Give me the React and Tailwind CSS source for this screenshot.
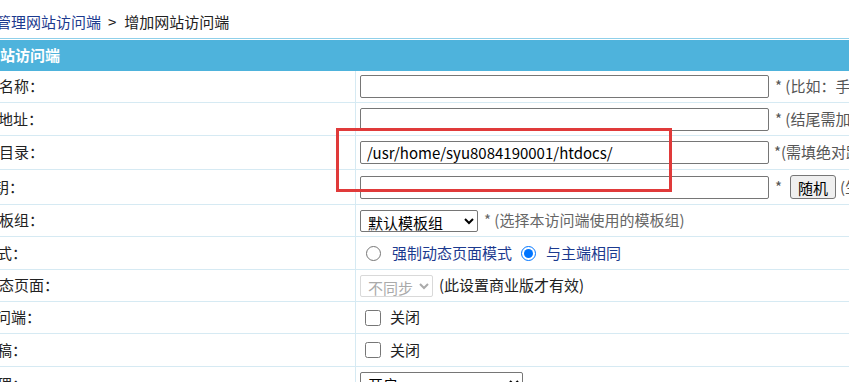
export default function App() {
  const font = { fontFamily: '"Microsoft YaHei", "Noto Sans CJK SC", "Noto Sans", sans-serif' };
  const rowBase = "flex items-center border-b border-[#d6eaf3]";
  const labelCell = "w-[356px] shrink-0 h-full flex items-center border-r border-[#d6eaf3] text-[15px] text-[#222] overflow-hidden whitespace-nowrap";
  const valCell = "flex items-center h-full pl-[4px] whitespace-nowrap text-[15px]";
  const inputCls = "w-[409px] h-[23px] border border-[#767676] rounded-[2px] px-[6px] text-[15px] text-black bg-white outline-none";
  return (
    <div className="w-[849px] h-[382px] overflow-hidden bg-white relative" style={font}>
      <div className="h-[38px] flex items-center text-[15px] whitespace-nowrap ml-[-4px] pt-[7px]">
        <span className="text-[#1c3a8f]">管理网站访问端</span>
        <span className="text-[#222] ml-[7px] mr-[8px]">&gt;</span>
        <span className="text-[#222]">增加网站访问端</span>
      </div>
      <div className="border-t border-[#8fd0ea] mt-0 pt-[1px]">
        <div className="h-[31px] bg-[#4eb3dc] flex items-center text-white font-bold text-[15px] whitespace-nowrap">
          <span className="ml-[-15px]">网站访问端</span>
        </div>
      </div>
      <div className="flex flex-col">
        <div className={`${rowBase} h-[32px]`}>
          <div className={labelCell}><span className="ml-[-1px]">名称：</span></div>
          <div className={valCell}>
            <input className={inputCls} defaultValue="" />
            <span className="ml-[6px] text-[#555]">* (比如：手机版)</span>
          </div>
        </div>
        <div className={`${rowBase} h-[33px]`}>
          <div className={labelCell}><span className="ml-[-2px]">地址：</span></div>
          <div className={valCell}>
            <input className={inputCls} defaultValue="" />
            <span className="ml-[6px] text-[#555]">* (结尾需加/)</span>
          </div>
        </div>
        <div className={`${rowBase} h-[34px]`}>
          <div className={labelCell}><span className="ml-[-1px]">目录：</span></div>
          <div className={valCell}>
            <input className={inputCls} defaultValue="/usr/home/syu8084190001/htdocs/" />
            <span className="ml-[5px] text-[#555]">*(需填绝对路径)</span>
          </div>
        </div>
        <div className={`${rowBase} h-[35px]`}>
          <div className={labelCell}><span className="ml-[-6px]">钥：</span></div>
          <div className={valCell}>
            <input className={inputCls} defaultValue="" />
            <span className="ml-[6px] text-[#555]">*</span>
            <button className="ml-[8px] h-[24px] px-[7px] bg-[#efefef] border border-[#767676] rounded-[3px] text-[15px] text-black leading-none">随机</button>
            <span className="ml-[4px] text-[#555]">(生成)</span>
          </div>
        </div>
        <div className={`${rowBase} h-[32px]`}>
          <div className={labelCell}><span className="ml-[-1px]">板组：</span></div>
          <div className={valCell}>
            <select className="w-[118px] h-[22px] border border-[#767676] rounded-[2px] text-[15px] text-black bg-white pl-[3px]">
              <option>默认模板组</option>
            </select>
            <span className="ml-[6px] text-[#666]">* (选择本访问端使用的模板组)</span>
          </div>
        </div>
        <div className={`${rowBase} h-[33px]`}>
          <div className={labelCell}><span className="ml-[-3px]">式：</span></div>
          <div className={`${valCell} text-[#1c3a8f]`}>
            <input type="radio" name="m" className="ml-[6px] w-[15px] h-[15px] accent-[#0075ff]" />
            <span className="ml-[11px]">强制动态页面模式</span>
            <input type="radio" name="m" defaultChecked className="ml-[9px] w-[15px] h-[15px] accent-[#0075ff]" />
            <span className="ml-[10px]">与主端相同</span>
          </div>
        </div>
        <div className={`${rowBase} h-[32px]`}>
          <div className={labelCell}><span className="ml-[-1px]">态页面：</span></div>
          <div className={valCell}>
            <select disabled className="w-[73px] h-[22px] border border-[#d9d9d9] rounded-[2px] text-[15px] text-[#aaa] bg-white pl-[3px]">
              <option>不同步</option>
            </select>
            <span className="ml-[6px] text-[#222]">(此设置商业版才有效)</span>
          </div>
        </div>
        <div className={`${rowBase} h-[32px]`}>
          <div className={labelCell}><span className="ml-[-4px]">问端：</span></div>
          <div className={`${valCell} text-[#222]`}>
            <input type="checkbox" className="ml-[5px] w-[16px] h-[16px]" />
            <span className="ml-[9px]">关闭</span>
          </div>
        </div>
        <div className={`${rowBase} h-[33px]`}>
          <div className={labelCell}><span className="ml-[-3px]">稿：</span></div>
          <div className={`${valCell} text-[#222]`}>
            <input type="checkbox" className="ml-[5px] w-[16px] h-[16px]" />
            <span className="ml-[9px]">关闭</span>
          </div>
        </div>
        <div className={`${rowBase} h-[33px] items-start`}>
          <div className={`${labelCell} items-start pt-[6px]`}><span className="ml-[-3px]">理：</span></div>
          <div className={`${valCell} items-start pt-[5px]`}>
            <select className="w-[163px] h-[22px] border border-[#767676] rounded-[2px] text-[15px] text-black bg-white pl-[3px]">
              <option>开启</option>
            </select>
          </div>
        </div>
      </div>
      <div className="absolute left-[336px] top-[128px] w-[336px] h-[64px] border-[3px] border-[#e03a3a] pointer-events-none" />
    </div>
  );
}
